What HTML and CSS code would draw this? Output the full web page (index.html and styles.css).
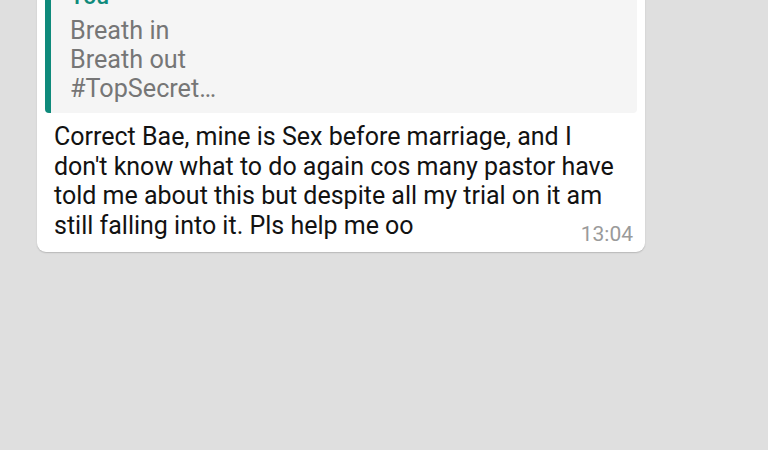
FILE: index.html
```html
<!DOCTYPE html>
<html>
<head>
<meta charset="utf-8">
<link rel="stylesheet" href="styles.css">
</head>
<body>
<div class="chat">
  <div class="bubble">
    <div class="quote">
      <div class="quote-name">You</div>
      <div class="quote-text">Breath in<br>Breath out<br>#TopSecret…</div>
    </div>
    <div class="message">Correct Bae, mine is Sex before marriage, and I don't know what to do again cos many pastor have told me about this but despite all my trial on it am still falling into it. Pls help me oo<span class="time">13:04</span></div>
  </div>
</div>
</body>
</html>
```
FILE: styles.css
```css
html, body {
  margin: 0;
  padding: 0;
  background: #dfdfdf;
  height: 100%;
  overflow: hidden;
}
.chat {
  padding-left: 37px;
  font-family: Roboto, "Liberation Sans", sans-serif;
}
.bubble {
  width: 608px;
  box-sizing: border-box;
  margin-top: -29px;
  background: #ffffff;
  border-radius: 9px;
  box-shadow: 0 1px 1.5px rgba(0,0,0,0.18);
  padding: 6px 8px 12px 8px;
}
.quote {
  background: #f5f5f5;
  border-left: 6px solid #0f8a7b;
  border-radius: 4px;
  padding: 6px 12px 10px 19px;
}
.quote-name {
  color: #0f8a7b;
  font-weight: 500;
  font-size: 23px;
  line-height: 28px;
  margin-bottom: 5px;
}
.quote-text {
  color: #767676;
  font-size: 25.2px;
  line-height: 29px;
}
.message {
  margin-top: 9px;
  padding: 0 9px 0 9px;
  color: #121212;
  font-size: 25px;
  line-height: 29.6px;
}
.message-text {
  display: inline;
}
.time {
  float: right;
  margin-top: 13px;
  margin-right: -5px;
  color: #9a9a9a;
  font-size: 21px;
  line-height: 20px;
  margin-left: 12px;
}
```
